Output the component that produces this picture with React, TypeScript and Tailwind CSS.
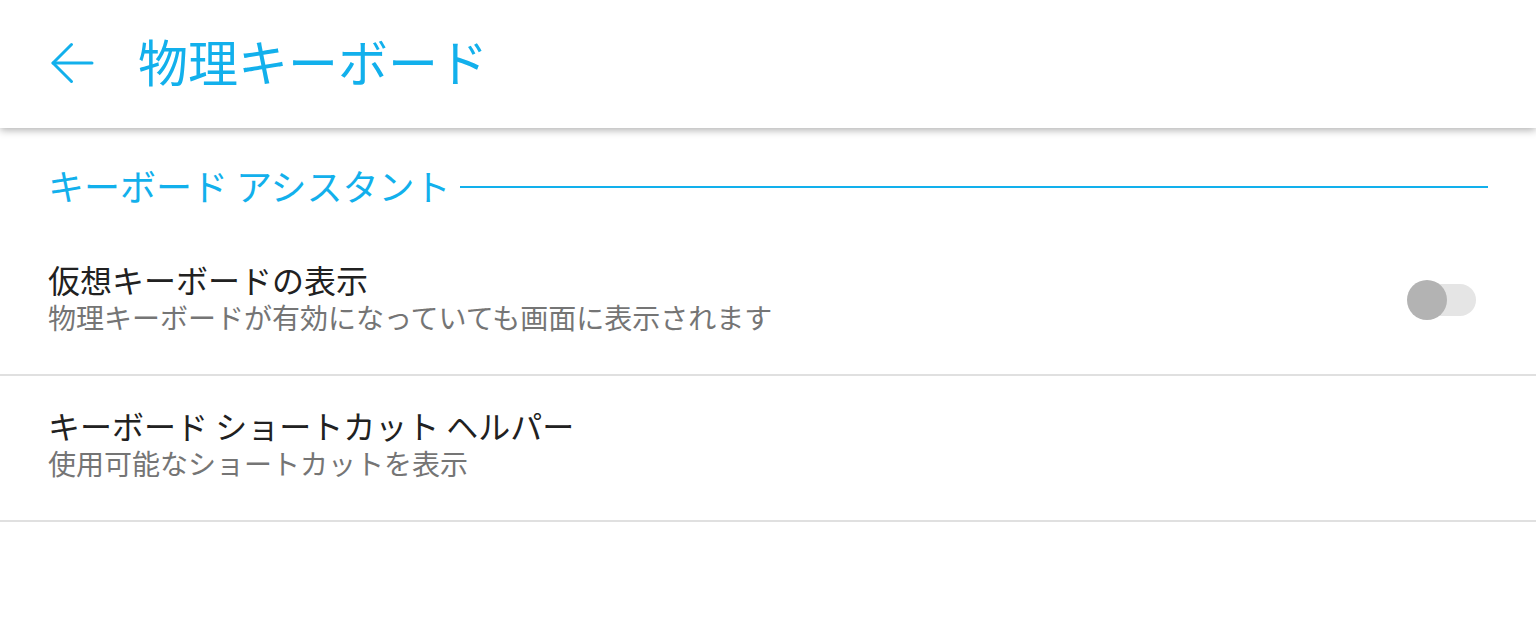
const font = { fontFamily: '"Noto Sans CJK JP", "Noto Sans", sans-serif' };

function BackArrow() {
  return (
    <svg width="44" height="44" viewBox="0 0 44 44" fill="none" stroke="#12b0ec" strokeWidth="3" strokeLinecap="round" strokeLinejoin="round">
      <path d="M42 22H3" />
      <path d="M21.5 3.5 3 22l18.5 18.5" />
    </svg>
  );
}

function Toggle() {
  return (
    <div className="relative w-[70px] h-[40px] flex items-center">
      <div className="ml-[12px] w-[57px] h-[32px] rounded-full bg-[#e5e5e5]" />
      <div className="absolute left-0 top-0 w-[40px] h-[40px] rounded-full bg-[#b3b3b3]" />
    </div>
  );
}

function SettingRow({ title, summary, toggle }: { title: string; summary: string; toggle?: boolean }) {
  return (
    <div className="flex items-start justify-between pl-[48px] pr-[59px] pt-[29px] h-[146px] border-b-2 border-[#e0e0e0]">
      <div className="flex flex-col">
        <span className="text-[32px] leading-[40px] text-[#212121]">{title}</span>
        <span className="text-[28px] leading-[37px] text-[#757575]">{summary}</span>
      </div>
      {toggle && <div className="mt-[21px]"><Toggle /></div>}
    </div>
  );
}

export default function App() {
  return (
    <div className="w-[1536px] h-[640px] bg-white overflow-hidden" style={font}>
      <header className="relative h-[128px] flex items-center bg-white shadow-[0_2px_8px_rgba(0,0,0,0.32)] z-10">
        <div className="ml-[50px] mb-[2px]">
          <BackArrow />
        </div>
        <h1 className="ml-[44px] mb-[8px] text-[50px] leading-none text-[#12b0ec]">物理キーボード</h1>
      </header>
      <section className="flex items-center pl-[48px] pr-[48px] pt-[33px] pb-[21px]">
        <span className="text-[36px] leading-[48px] text-[#12b0ec] whitespace-nowrap">キーボード アシスタント</span>
        <div className="flex-1 ml-[9px] mt-[4px] h-[2px] bg-[#12b0ec]" />
      </section>
      <SettingRow title="仮想キーボードの表示" summary="物理キーボードが有効になっていても画面に表示されます" toggle />
      <SettingRow title="キーボード ショートカット ヘルパー" summary="使用可能なショートカットを表示" />
    </div>
  );
}
